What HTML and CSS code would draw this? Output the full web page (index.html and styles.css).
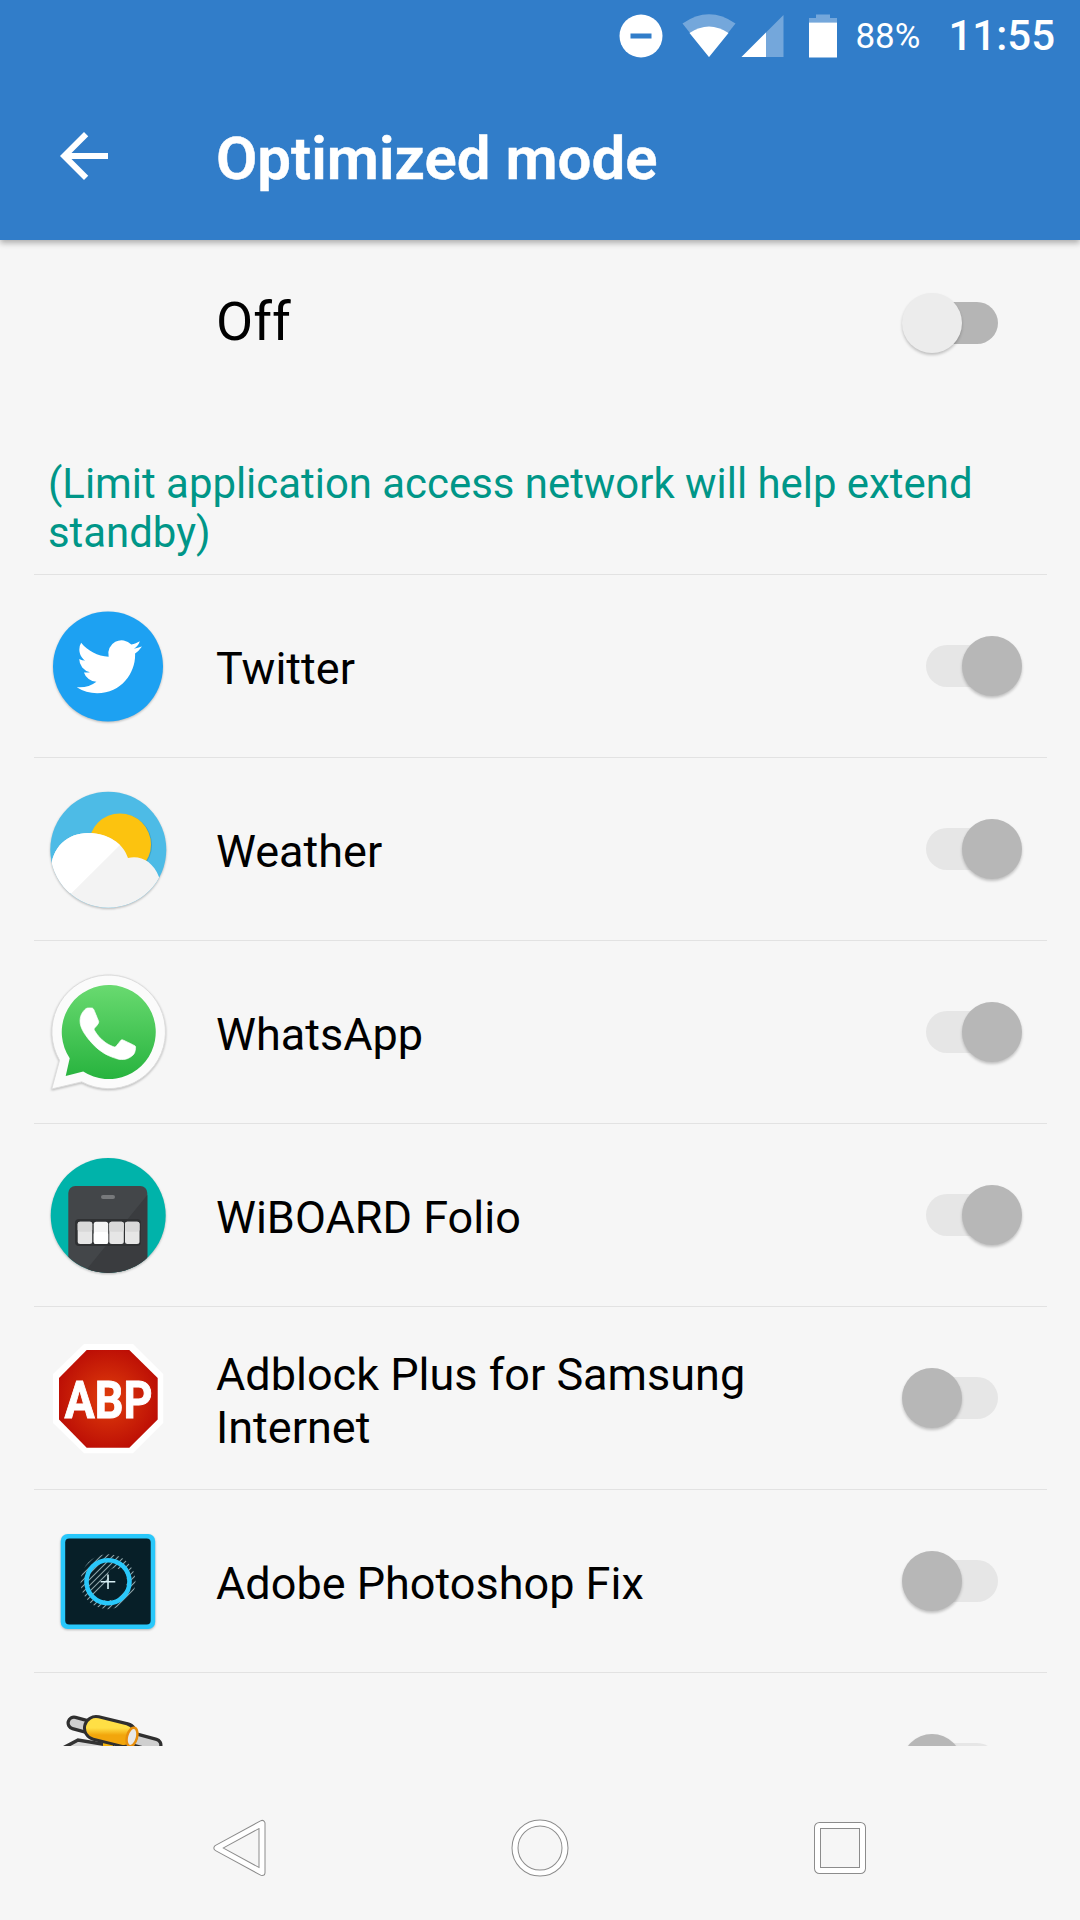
FILE: index.html
```html
<!DOCTYPE html>
<html lang="en">
<head>
<meta charset="utf-8">
<title>Optimized mode</title>
<link rel="stylesheet" href="styles.css">
</head>
<body>
<div class="screen">
  <header class="appbar">
    <div class="status">
      <svg class="st-dnd" width="44" height="44" viewBox="0 0 44 44"><circle cx="22" cy="22" r="21.500" fill="#fff"/><rect x="11.500" y="19.500" width="21" height="5" fill="#317dc9"/></svg>
      <svg class="st-wifi" width="54" height="44" viewBox="0 0 54 44"><path d="M27 43 L0.500 9.500 Q27 -9 53.500 9.500 Z" fill="#fff" fill-opacity=".33"/><path d="M27 43 L7.500 19 Q27 6 46.500 19 Z" fill="#fff"/></svg>
      <svg class="st-signal" width="43" height="44" viewBox="0 0 43 44"><path d="M0.500 43 L42.500 1 V43 Z" fill="#fff" fill-opacity=".33"/><path d="M0.500 43 L25 18.500 V43 Z" fill="#fff"/></svg>
      <svg class="st-batt" width="28" height="44" viewBox="0 0 28 44"><path d="M7 0.500 H21 V4 H28 V8.500 H0 V4 H7 Z" fill="#fff" fill-opacity=".33"/><rect x="0" y="8.500" width="28" height="35" fill="#fff"/></svg>
      <span class="st-pct">88%</span>
      <span class="st-time">11:55</span>
    </div>
    <div class="titlebar">
      <svg class="back" width="72" height="72" viewBox="0 0 24 24"><path d="M20 11H7.830l5.590-5.590L12 4l-8 8 8 8 1.410-1.410L7.830 13H20v-2z" fill="#fff"/></svg>
      <h1 class="title">Optimized mode</h1>
    </div>
  </header>

  <main class="content">
    <section class="master">
      <span class="master-label">Off</span>
      <span class="switch switch-master"><i class="track"></i><i class="knob"></i></span>
    </section>
    <p class="note">(Limit application access network will help extend standby)</p>

    <ul class="list">
      <li class="row">
        <svg class="app-icon" width="120" height="120" viewBox="0 0 120 120">
          <circle cx="60" cy="60.500" r="55" fill="#1da1f2"/>
          <path transform="translate(28.700 28.200) scale(2.710)" fill="#fff" d="M23.953 4.570a10 10 0 01-2.825.775 4.958 4.958 0 002.163-2.723c-.951.555-2.005.959-3.127 1.184a4.920 4.920 0 00-8.384 4.482C7.690 8.095 4.067 6.130 1.640 3.162a4.822 4.822 0 00-.666 2.475c0 1.710.870 3.213 2.188 4.096a4.904 4.904 0 01-2.228-.616v.060a4.923 4.923 0 003.946 4.827 4.996 4.996 0 01-2.212.085 4.936 4.936 0 004.604 3.417 9.867 9.867 0 01-6.102 2.105c-.390 0-.779-.023-1.170-.067a13.995 13.995 0 007.557 2.209c9.053 0 13.998-7.496 13.998-13.985 0-.210 0-.420-.015-.630A9.935 9.935 0 0024 4.590z"/>
        </svg>
        <span class="label">Twitter</span>
        <span class="switch is-on"><i class="track"></i><i class="knob"></i></span>
      </li>
      <li class="row">
        <svg class="app-icon" width="120" height="120" viewBox="0 0 120 120">
          <defs><clipPath id="wx"><circle cx="60.300" cy="60.700" r="58"/></clipPath></defs>
          <circle cx="60.300" cy="60.700" r="58" fill="#4dbbe6"/>
          <circle cx="73" cy="56" r="31" fill="#3aa3c9"/>
          <circle cx="72" cy="55.500" r="31" fill="#fcc30f"/>
          <g clip-path="url(#wx)">
            <path d="M3 82 C3 58 20 44 40 44 C60 44 75 54 80 69 C92 66 105 72 111 88 L111 125 L0 125 Z" fill="#f3f3f3"/>
            <path d="M3 82 C3 58 20 44 40 44 C52 44 63 48 72 56 L23.700 104 L0 104 Z" fill="#fff"/>
          </g>
        </svg>
        <span class="label">Weather</span>
        <span class="switch is-on"><i class="track"></i><i class="knob"></i></span>
      </li>
      <li class="row">
        <svg class="app-icon" width="120" height="120" viewBox="0 0 120 120">
          <defs><linearGradient id="wa" x1="0" y1="0" x2="0" y2="1"><stop offset="0" stop-color="#69da70"/><stop offset="1" stop-color="#27b33e"/></linearGradient></defs>
          <path d="M3.700 117 L11.500 88.300 A56.800 56.800 0 1 1 33.800 109.900 Z" fill="#fbfbfb" stroke="#dcdcdc" stroke-width="1"/>
          <path d="M17.700 104 L21.700 86.200 A47 47 0 1 1 35.200 99.500 Z" fill="url(#wa)"/>
          <path transform="translate(4.400 6.500) scale(4.600)" fill="#fff" stroke="#fff" stroke-width=".15" d="M17.472 14.382c-.297-.149-1.758-.867-2.030-.967-.273-.099-.471-.148-.670.150-.197.297-.767.966-.940 1.164-.173.199-.347.223-.644.075-.297-.150-1.255-.463-2.390-1.475-.883-.788-1.480-1.761-1.653-2.059-.173-.297-.018-.458.130-.606.134-.133.298-.347.446-.520.149-.174.198-.298.298-.497.099-.198.050-.371-.025-.520-.075-.149-.669-1.612-.916-2.207-.242-.579-.487-.500-.669-.510-.173-.008-.371-.010-.570-.010-.198 0-.520.074-.792.372-.272.297-1.040 1.016-1.040 2.479 0 1.462 1.065 2.875 1.213 3.074.149.198 2.096 3.200 5.077 4.487.709.306 1.262.489 1.694.625.712.227 1.360.195 1.871.118.571-.085 1.758-.719 2.006-1.413.248-.694.248-1.289.173-1.413-.074-.124-.272-.198-.570-.347z"/>
        </svg>
        <span class="label">WhatsApp</span>
        <span class="switch is-on"><i class="track"></i><i class="knob"></i></span>
      </li>
      <li class="row">
        <svg class="app-icon" width="120" height="120" viewBox="0 0 120 120">
          <defs><clipPath id="wb"><circle cx="60.200" cy="60.500" r="57.500"/></clipPath></defs>
          <circle cx="60.200" cy="60.500" r="57.500" fill="#00b3aa"/>
          <g clip-path="url(#wb)">
            <rect x="20.300" y="31" width="79" height="100" rx="7" fill="#434649"/>
            <path d="M99.300 40 L30 125 H99.300 Z" fill="#3a3c3f"/>
            <rect x="53" y="40" width="14" height="4" rx="2" fill="#77797b"/>
            <rect x="27" y="64" width="66" height="27" rx="4" fill="#2f3133"/>
            <rect x="29.700" y="66.700" width="14.500" height="22.300" rx="2.500" fill="#e6e6e6"/>
            <rect x="45.700" y="66.700" width="14.500" height="22.300" rx="2.500" fill="#f4f4f4"/>
            <rect x="61.300" y="66.700" width="14.500" height="22.300" rx="2.500" fill="#e6e6e6"/>
            <rect x="77" y="66.700" width="14.500" height="22.300" rx="2.500" fill="#e6e6e6"/>
            <rect x="45.700" y="77" width="14.500" height="12" rx="2" fill="#fff"/>
            <rect x="29.700" y="66.700" width="14.500" height="10" rx="2" fill="#d9d9d9"/>
            <rect x="61.300" y="66.700" width="14.500" height="10" rx="2" fill="#d9d9d9"/>
            <rect x="77" y="66.700" width="14.500" height="10" rx="2" fill="#d9d9d9"/>
          </g>
        </svg>
        <span class="label">WiBOARD Folio</span>
        <span class="switch is-on"><i class="track"></i><i class="knob"></i></span>
      </li>
      <li class="row">
        <svg class="app-icon icon-flat" width="120" height="120" viewBox="0 0 120 120">
          <defs><radialGradient id="abp" cx=".5" cy=".5" r=".55"><stop offset="0" stop-color="#e03e0b"/><stop offset="1" stop-color="#bb0d05"/></radialGradient></defs>
          <path d="M36 6 H85 L115.300 36 V85 L85 115.300 H36 L5 85 V36 Z" fill="#fff"/>
          <path d="M38.700 12 H81.300 L109.700 40 V81.500 L81.300 109.700 H38.700 L11 81.500 V40 Z" fill="url(#abp)"/>
          <text class="abp-text" transform="translate(16.500 79.700) scale(1 1.170)">ABP</text>
        </svg>
        <span class="label">Adblock Plus for Samsung Internet</span>
        <span class="switch"><i class="track"></i><i class="knob"></i></span>
      </li>
      <li class="row">
        <svg class="app-icon" width="120" height="120" viewBox="0 0 120 120">
          <defs><clipPath id="fx"><circle cx="60" cy="60.700" r="27.500"/></clipPath></defs>
          <rect x="12.700" y="13" width="94.500" height="95" rx="7" fill="#29c8fb"/>
          <rect x="17.200" y="17.500" width="85.500" height="86" rx="4" fill="#071f28"/>
          <g clip-path="url(#fx)" stroke="#8ea4a9" stroke-width="1.100">
            <path d="M20 56 L56 20 M20 62 L62 20 M20 68 L68 20 M20 74 L74 20 M20 80 L80 20 M20 86 L86 20 M20 92 L92 20 M26 92 L98 20 M32 92 L98 26 M38 92 L98 32 M44 92 L98 38 M50 92 L98 44 M56 92 L98 50 M62 92 L98 56"/>
          </g>
          <path d="M45.900 74.800 A20 20 0 0 0 74.100 46.600 Z" fill="#071f28"/>
          <circle cx="67" cy="54" r="7" fill="#071f28"/>
          <circle cx="60" cy="60.700" r="21.500" fill="none" stroke="#29c8fb" stroke-width="4.600"/>
          <path d="M52.700 60.700 H67.300 M60 53.400 V68" stroke="#d8f0f5" stroke-width="1.600" fill="none"/>
        </svg>
        <span class="label">Adobe Photoshop Fix</span>
        <span class="switch"><i class="track"></i><i class="knob"></i></span>
      </li>
      <li class="row">
        <svg class="app-icon icon-flat" width="120" height="120" viewBox="0 0 120 120">
          <defs><linearGradient id="tube" x1="0" y1="0" x2="0" y2="1"><stop offset="0" stop-color="#ffdf45"/><stop offset="1" stop-color="#f2a60c"/></linearGradient></defs>
          <path d="M15 44 L30 36 L66 42" fill="#d8d8d8" stroke="#333" stroke-width="3.500"/>
          <rect x="55" y="34" width="10" height="20" fill="#f5b50f"/>
          <path d="M26 19 L107 41" stroke="#2f2f2f" stroke-width="15" stroke-linecap="round" fill="none"/>
          <path d="M26 19 L107 41" stroke="#cfcfcf" stroke-width="8.500" stroke-linecap="round" fill="none"/>
          <path d="M48 24 L77 31" stroke="#2f2f2f" stroke-width="26" stroke-linecap="round" fill="none"/>
          <path d="M48 24 L76 31" stroke="url(#tube)" stroke-width="20" stroke-linecap="round" fill="none"/>
          <ellipse cx="84" cy="33" rx="5" ry="9.500" transform="rotate(15 84 33)" fill="#e8e8e8" stroke="#e88f0c" stroke-width="2.500"/>
        </svg>
        <span class="label"></span>
        <span class="switch"><i class="track"></i><i class="knob"></i></span>
      </li>
    </ul>
  </main>

  <nav class="navbar">
    <svg class="nav-icon" width="70" height="70" viewBox="0 0 70 70"><path class="nav-o" d="M57 10.500 V59.500 L12 35 Z"/><path class="nav-i" d="M57 10.500 V59.500 L12 35 Z"/></svg>
    <svg class="nav-icon" width="70" height="70" viewBox="0 0 70 70"><circle class="nav-o" cx="35" cy="35" r="25"/><circle class="nav-i" cx="35" cy="35" r="25"/></svg>
    <svg class="nav-icon" width="70" height="70" viewBox="0 0 70 70"><rect class="nav-o" x="12.500" y="12.500" width="45" height="45" rx="2"/><rect class="nav-i" x="12.500" y="12.500" width="45" height="45" rx="2"/></svg>
  </nav>
</div>
</body>
</html>
```

FILE: styles.css
```css
* { box-sizing: border-box; }
html, body { margin: 0; padding: 0; }
body { background: #f6f6f6; font-family: Roboto, "Noto Sans", sans-serif; color: #000; }

.screen { width: 1080px; height: 1920px; display: flex; flex-direction: column; overflow: hidden; }

.appbar { position: relative; z-index: 2; height: 240px; flex: none; background: #317dc9; box-shadow: 0 3px 6px rgba(0, 0, 0, .3); color: #fff; }

.status { height: 72px; display: flex; align-items: flex-start; justify-content: flex-end; padding: 14px 25px 0 0; }
.st-dnd { margin-right: 19px; }
.st-wifi { margin-right: 5px; }
.st-signal { margin-right: 25px; }
.st-batt { margin-right: 18px; }
.st-pct { width: 66px; font-size: 35px; line-height: 46px; margin-right: 27px; }
.st-time { font-size: 42px; font-weight: 500; line-height: 44px; }

.titlebar { display: flex; align-items: center; height: 168px; padding-left: 48px; }
.back { flex: none; }
.title { margin: 6px 0 0 96px; font-size: 60px; font-weight: 600; line-height: 96px; -webkit-text-stroke: .5px #fff; }

.content { flex: 1; min-height: 0; overflow: hidden; }

.master { height: 166px; display: flex; align-items: center; padding: 0 58px 0 216px; justify-content: space-between; }
.master-label { font-size: 54px; line-height: 60px; margin-top: -2px; }

.note { margin: 0; height: 168px; padding: 53px 33px 0 48px; font-size: 41.900px; line-height: 49px; color: #009688; }

.list { list-style: none; margin: 0 33px 0 34px; padding: 0; }
.row { height: 183px; border-top: 1px solid #e2e2e2; display: flex; align-items: center; padding: 0 25px 0 14px; }
.app-icon { flex: none; margin-right: 48px; filter: drop-shadow(0 1px 1px rgba(0, 0, 0, .25)); }
.icon-flat { filter: none; }
.abp-text { font-family: Roboto, "Liberation Sans", sans-serif; font-weight: 700; font-size: 45px; fill: #fff; stroke: #fff; stroke-width: .8px; }
.label { flex: 1; font-size: 45px; line-height: 53px; padding-top: 5px; }

.switch { position: relative; flex: none; display: block; width: 120px; height: 60px; }
.track { position: absolute; left: 24px; top: 9px; width: 72px; height: 42px; border-radius: 21px; background: #e6e6e6; }
.knob { position: absolute; left: 0; top: 0; width: 60px; height: 60px; border-radius: 50%; background: #b7b7b7; box-shadow: 0 2px 3px rgba(0, 0, 0, .22); }
.is-on .knob { left: 60px; }
.switch-master .track { background: #b5b5b5; }
.switch-master .knob { background: #ececec; }

.navbar { flex: none; height: 174px; display: grid; grid-template-columns: repeat(3, 300px); justify-content: center; justify-items: center; padding-top: 67px; background: #f6f6f6; }
.nav-icon { display: block; }
.nav-o { fill: none; stroke: #8c8c8c; stroke-width: 7; stroke-linejoin: round; }
.nav-i { fill: none; stroke: #fff; stroke-width: 5; stroke-linejoin: round; }
```
